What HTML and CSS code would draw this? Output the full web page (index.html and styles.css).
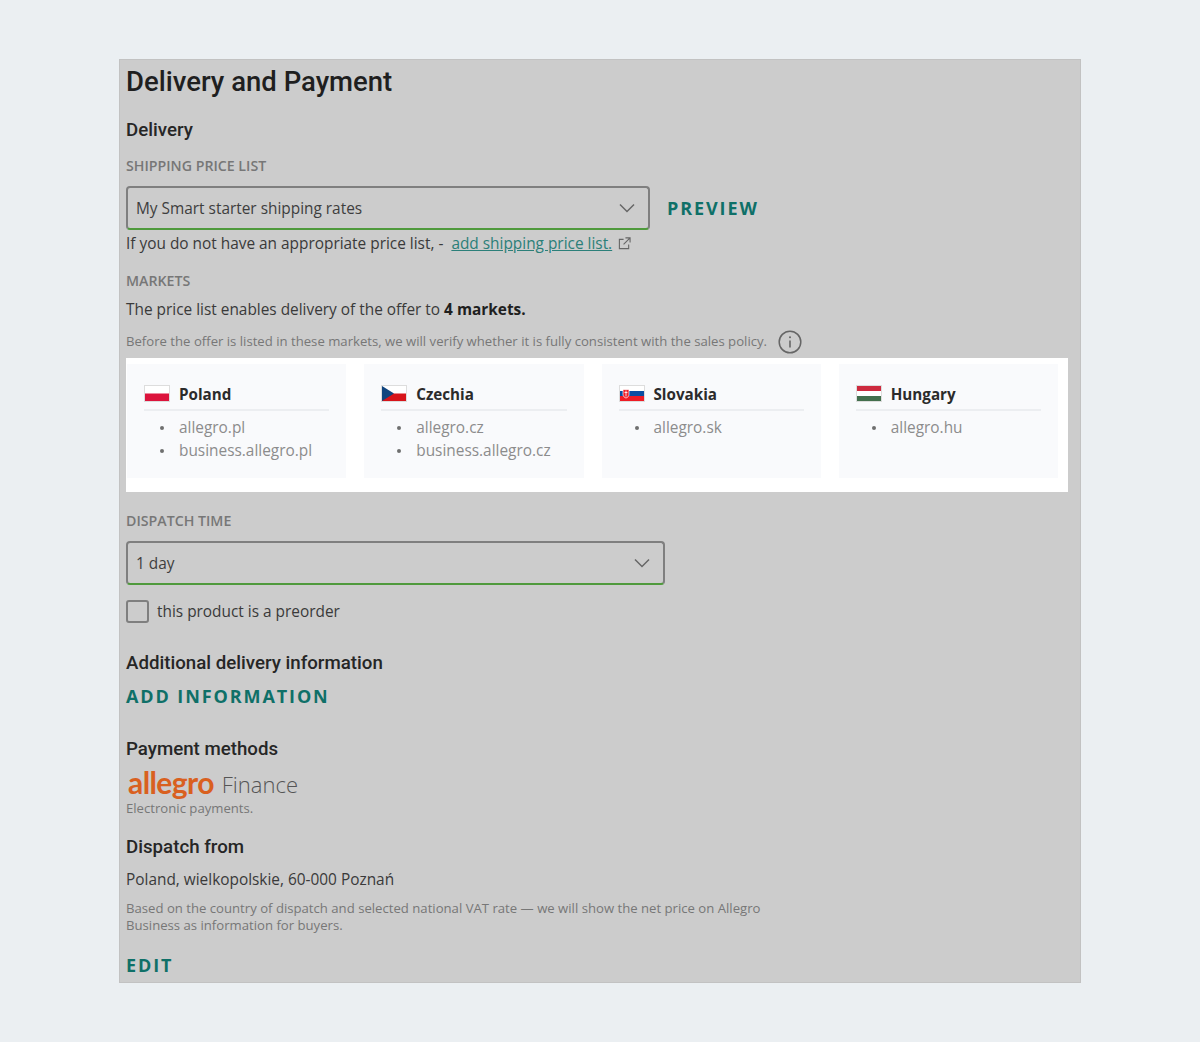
FILE: index.html
```html
<!DOCTYPE html>
<html lang="en">
<head>
<meta charset="utf-8">
<title>Delivery and Payment</title>
<link rel="stylesheet" href="styles.css">
</head>
<body>
<main class="panel">
  <h1 class="title">Delivery and Payment</h1>
  <h2 class="heading heading-delivery">Delivery</h2>
  <div class="label label-shipping">SHIPPING PRICE LIST</div>
  <div class="select-row">
    <div class="select select-wide">
      <span>My Smart starter shipping rates</span>
      <svg class="chevron" viewBox="0 0 16 10" width="16" height="10"><path d="M1 1.500l7 7 7-7" fill="none" stroke="#666" stroke-width="1.500"/></svg>
    </div>
    <span class="action action-preview">PREVIEW</span>
  </div>
  <p class="text hint">If you do not have an appropriate price list, - <a class="link">add shipping price list.</a>
    <svg class="ext" viewBox="0 0 14 14" width="13" height="13"><path d="M6 2.500H1.500v10h10V8M8 1h5v5M13 1L6 8" fill="none" stroke="#666" stroke-width="1.200"/></svg>
  </p>
  <div class="label label-markets">MARKETS</div>
  <p class="text enables">The price list enables delivery of the offer to <b>4 markets.</b></p>
  <div class="note-row">
    <span class="small">Before the offer is listed in these markets, we will verify whether it is fully consistent with the sales policy.</span>
    <svg class="info" viewBox="0 0 24 24" width="24" height="24"><circle cx="12" cy="12" r="10.800" fill="none" stroke="#666" stroke-width="1.500"/><path d="M12 10.500v7" stroke="#666" stroke-width="1.600"/><circle cx="12" cy="7.200" r="1" fill="#666"/></svg>
  </div>
  <section class="markets">
    <article class="market">
      <header class="market-head">
        <svg class="flag" viewBox="0 0 26 17"><rect x=".5" y=".5" width="25" height="16" fill="#fff" stroke="#ddd"/><rect x="1" y="8.500" width="24" height="7.500" fill="#dc143c"/></svg>
        <span>Poland</span>
      </header>
      <ul class="domains"><li>allegro.pl</li><li>business.allegro.pl</li></ul>
    </article>
    <article class="market">
      <header class="market-head">
        <svg class="flag" viewBox="0 0 26 17"><rect x=".5" y=".5" width="25" height="16" fill="#fff" stroke="#ddd"/><rect x="1" y="8.500" width="24" height="7.500" fill="#d7141a"/><path d="M1 1l12 7.500L1 16z" fill="#11457e"/></svg>
        <span>Czechia</span>
      </header>
      <ul class="domains"><li>allegro.cz</li><li>business.allegro.cz</li></ul>
    </article>
    <article class="market">
      <header class="market-head">
        <svg class="flag" viewBox="0 0 26 17"><rect x=".5" y=".5" width="25" height="16" fill="#fff" stroke="#ddd"/><rect x="1" y="6" width="24" height="5" fill="#0b4ea2"/><rect x="1" y="11" width="24" height="5" fill="#ee1c25"/><path d="M4 4.500h6v5c0 2-1.500 3-3 3.500-1.500-.5-3-1.500-3-3.500z" fill="#ee1c25" stroke="#fff" stroke-width=".7"/><path d="M7 5.500v6M5.500 7.500h3" stroke="#fff" stroke-width=".8"/></svg>
        <span>Slovakia</span>
      </header>
      <ul class="domains"><li>allegro.sk</li></ul>
    </article>
    <article class="market">
      <header class="market-head">
        <svg class="flag" viewBox="0 0 26 17"><rect x=".5" y=".5" width="25" height="16" fill="#fff" stroke="#ddd"/><rect x="1" y="1" width="24" height="5" fill="#cd2a3e"/><rect x="1" y="11" width="24" height="5" fill="#436f4d"/></svg>
        <span>Hungary</span>
      </header>
      <ul class="domains"><li>allegro.hu</li></ul>
    </article>
  </section>
  <div class="label label-dispatch">DISPATCH TIME</div>
  <div class="select select-time">
    <span>1 day</span>
    <svg class="chevron" viewBox="0 0 16 10" width="16" height="10"><path d="M1 1.500l7 7 7-7" fill="none" stroke="#666" stroke-width="1.500"/></svg>
  </div>
  <label class="check-row"><span class="checkbox"></span><span class="text">this product is a preorder</span></label>
  <h2 class="heading heading-additional">Additional delivery information</h2>
  <div class="action action-add">ADD INFORMATION</div>
  <h2 class="heading heading-payment">Payment methods</h2>
  <div class="brand"><span class="brand-logo">allegro</span><span class="brand-sub">Finance</span></div>
  <div class="small electronic">Electronic payments.</div>
  <h2 class="heading heading-from">Dispatch from</h2>
  <p class="text address">Poland, wielkopolskie, 60-000 Poznań</p>
  <p class="small vat">Based on the country of dispatch and selected national VAT rate — we will show the net price on Allegro Business as information for buyers.</p>
  <div class="action action-edit">EDIT</div>
</main>
</body>
</html>
```
FILE: styles.css
```css
* { box-sizing: border-box; }
html, body { margin: 0; padding: 0; }
body {
  background: #ebeff2;
  font-family: "Open Sans", sans-serif;
  color: #3a3a3a;
  padding: 59px 119px 60px;
}
.panel {
  height: 924px;
  background: #cccccc;
  border: 1px solid #c2c2c2;
  padding: 0 6px;
  overflow: hidden;
}
.title {
  margin: 0;
  padding-top: 3px;
  font: 500 27.5px/38px Roboto, sans-serif;
  color: #1f1f1f;
}
.heading {
  margin: 0;
  font: 500 18.7px/24px Roboto, sans-serif;
  color: #262626;
}
.heading-delivery { margin-top: 17px; }
.label {
  font-size: 14.2px;
  line-height: 20px;
  font-weight: 600;
  color: #777;
}
.label-shipping { margin-top: 14px; }
.select-row {
  display: flex;
  align-items: center;
  gap: 17px;
  margin-top: 10px;
}
.select {
  display: flex;
  align-items: center;
  justify-content: space-between;
  height: 44px;
  padding: 0 13px 0 8px;
  border: 2px solid #7f7f7f;
  border-bottom-color: #4f9a3c;
  border-radius: 4px;
  font-size: 15.4px;
  color: #3e3e3e;
}
.select-wide { width: 524px; }
.select-time { width: 539px; margin-top: 10px; }
.action {
  font-size: 18px;
  line-height: 24px;
  font-weight: 700;
  letter-spacing: 1.9px;
  color: #0f7068;
}
.text {
  margin: 0;
  font-size: 15.4px;
  line-height: 22px;
  color: #3a3a3a;
}
.hint { margin-top: 3px; white-space: nowrap; }
.link { margin-left: 4px; color: #2b7f79; text-decoration: underline; }
.ext { margin-left: 2px; vertical-align: -1px; }
.label-markets { margin-top: 16px; }
.enables { margin-top: 8px; }
.enables b { color: #1f1f1f; }
.note-row {
  display: flex;
  align-items: center;
  gap: 10px;
  margin-top: 8px;
}
.info { transform: translate(1px, 1px); }
.small {
  font-size: 13.15px;
  line-height: 18px;
  color: #777;
}
.markets {
  display: grid;
  grid-template-columns: repeat(4, 1fr);
  gap: 18px;
  width: 942px;
  height: 134px;
  margin-top: 5px;
  padding: 6px 10px 14px 1px;
  background: #fff;
}
.market {
  background: #f9fafc;
  padding: 16px 17px 0;
}
.market-head {
  display: flex;
  align-items: center;
  gap: 9px;
  height: 31px;
  padding-bottom: 2px;
  border-bottom: 2px solid #eceef1;
  font-size: 15.2px;
  font-weight: 700;
  color: #2b2b2b;
}
.flag { width: 26px; height: 17px; margin-bottom: 1px; }
.domains {
  margin: 5px 0 0;
  padding: 0;
  list-style: none;
  font-size: 15.4px;
  line-height: 23px;
  color: #8c8c8c;
}
.domains li {
  display: flex;
  align-items: center;
  gap: 15px;
  padding-left: 16px;
}
.domains li::before {
  content: "";
  width: 4px;
  height: 4px;
  border-radius: 50%;
  background: #6f6f6f;
}
.label-dispatch { margin-top: 19px; }
.check-row {
  display: flex;
  align-items: center;
  gap: 8px;
  margin-top: 15px;
}
.checkbox {
  width: 23px;
  height: 23px;
  border: 2px solid #7f7f7f;
  border-radius: 3px;
}
.heading-additional { margin-top: 28px; }
.action-add { margin-top: 9px; }
.heading-payment { margin-top: 29px; }
.brand {
  display: flex;
  align-items: baseline;
  gap: 8px;
  height: 36px;
  padding: 2px 0 0 2px;
}
.brand-logo {
  font: 700 30px/36px Lato, sans-serif;
  color: #d9601f;
  letter-spacing: -.6px;
  transform: translateY(1px);
}
.brand-sub {
  font: 300 22px/38px "Open Sans", sans-serif;
  color: #555;
}
.electronic { margin-top: 2px; }
.heading-from { margin-top: 18px; }
.address { margin-top: 10px; }
.vat { width: 650px; margin: 9px 0 0; line-height: 17px; }
.action-edit { margin-top: 19px; }
```
